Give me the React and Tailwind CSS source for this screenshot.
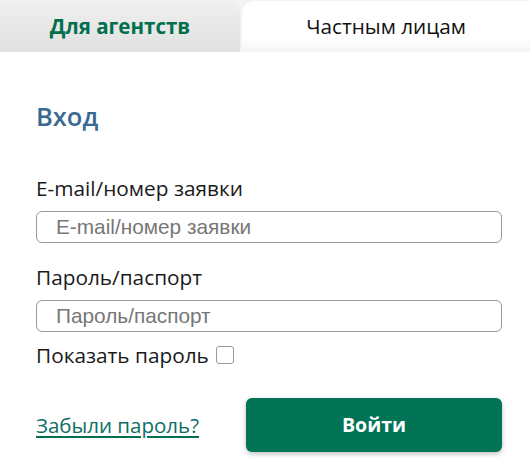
import React, { useState } from 'react';

const App = () => {
  const [show, setShow] = useState(false);

  return (
    <div className="w-[530px] h-[476px] bg-white font-['Open_Sans',sans-serif] text-[#1a1a1a]">
      <div className="flex gap-[2px] bg-[#f2f2f2] pt-[1px]">
        <button className="w-[240px] h-[51px] rounded-tr-[12px] bg-gradient-to-b from-[#efefef] to-[#e1e1e1] text-[20.5px] font-bold text-[#00704e]">
          Для агентств
        </button>
        <button className="flex-1 h-[51px] rounded-tl-[12px] bg-gradient-to-b from-white from-75% to-[#f4f4f4] text-[20.7px] text-[#111]">
          Частным лицам
        </button>
      </div>

      <div className="px-[36px] pr-[28px]">
        <h1 className="mt-[48px] text-[25.5px] font-semibold text-[#3b6891] leading-[32px]">Вход</h1>

        <label className="block mt-[44px] text-[20.8px] leading-[24px]">E-mail/номер заявки</label>
        <input
          className="mt-[11px] block w-full h-[32px] rounded-[6px] border border-[#999] px-[19px] font-['Liberation_Sans',Arial,sans-serif] text-[20.8px] placeholder:text-[#777] outline-none"
          placeholder="E-mail/номер заявки"
        />

        <label className="block mt-[22px] text-[20.8px] leading-[24px]">Пароль/паспорт</label>
        <input
          type={show ? 'text' : 'password'}
          className="mt-[11px] block w-full h-[32px] rounded-[6px] border border-[#999] px-[19px] font-['Liberation_Sans',Arial,sans-serif] text-[20.8px] placeholder:text-[#777] outline-none"
          placeholder="Пароль/паспорт"
        />

        <label className="flex items-center mt-[11px] text-[20.8px] leading-[24px]">
          Показать пароль
          <input
            type="checkbox"
            checked={show}
            onChange={() => setShow(!show)}
            className="ml-[7px] appearance-none w-[18px] h-[18px] rounded-[3px] border border-[#999] bg-white"
          />
        </label>

        <div className="flex items-center justify-between mt-[31px]">
          <a href="#" className="text-[20.5px] text-[#0d6f66] underline decoration-[#00704e] underline-offset-[3px]">
            Забыли пароль?
          </a>
          <button className="w-[256px] h-[54px] rounded-[6px] bg-[#007455] text-white text-[19.5px] font-bold shadow-[0_2px_5px_rgba(0,0,0,0.25)]">
            Войти
          </button>
        </div>
      </div>
    </div>
  );
};

export default App;
